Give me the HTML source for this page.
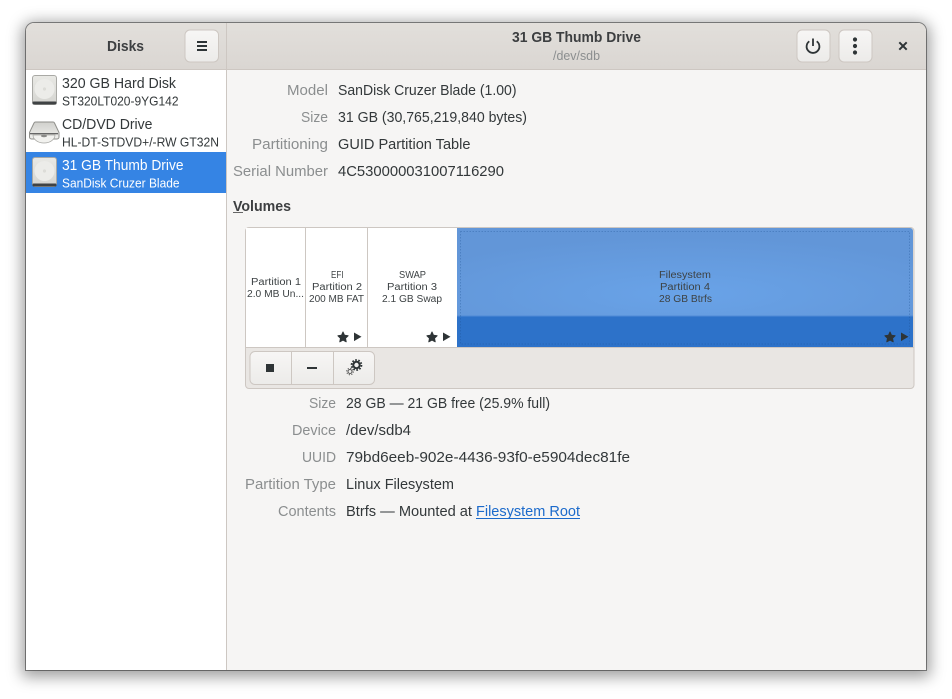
<!DOCTYPE html>
<html><head><meta charset="utf-8"><style>
html,body{margin:0;padding:0;background:#fff;width:952px;height:699px;overflow:hidden}
svg{position:absolute;left:0;top:0}
#win{position:absolute;left:26px;top:23px;width:900px;height:647px;background:#f6f5f4;border-radius:8px 8px 0 0;box-shadow:0 0 0 1px rgba(0,0,0,.42),0 3px 15px 4px rgba(0,0,0,.38)}
text{font-family:"Liberation Sans","DejaVu Sans",sans-serif;font-size:14.67px;fill:#33383a}
.b{font-weight:bold;fill:#3d3f41}.l{fill:#8b8e8f}.s{font-size:12.5px}.p{font-size:10px;fill:#3d4244}
.w{fill:#fff}
</style></head><body>
<div id="win"></div>
<svg width="952" height="699" viewBox="0 0 952 699">
<defs>
<linearGradient id="h" x1="0" y1="0" x2="0" y2="1"><stop offset="0" stop-color="#e2dfdb"/><stop offset="1" stop-color="#dad6d2"/></linearGradient>
<linearGradient id="btn" x1="0" y1="0" x2="0" y2="1"><stop offset="0" stop-color="#f7f6f5"/><stop offset="1" stop-color="#ecebe9"/></linearGradient>
<linearGradient id="dk" x1="0" y1="0" x2="0" y2="1"><stop offset="0" stop-color="#e9e9e5"/><stop offset="1" stop-color="#d4d4d0"/></linearGradient>
<linearGradient id="lid" x1="0" y1="0" x2="0" y2="1"><stop offset="0" stop-color="#d0d0cc"/><stop offset="1" stop-color="#f0f0ed"/></linearGradient>
<radialGradient id="sheen" cx=".5" cy=".75" r=".65"><stop offset="0" stop-color="#69a3e8"/><stop offset="1" stop-color="#6296d8"/></radialGradient>
<g id="disk"><rect x="0.5" y="0.5" width="24" height="29" rx="2.5" fill="url(#dk)" stroke="#a9a9a5"/><circle cx="12.5" cy="14" r="10" fill="#ecece9"/><circle cx="12.5" cy="14" r="1.6" fill="#dcdcd8"/><rect x="0.5" y="26.5" width="24" height="3" rx="1" fill="#3f4244"/></g>
<path id="star" d="M6 1 7.500 4.300 11.100 4.800 8.500 7.300 9.200 10.800 6 9.100 2.800 10.800 3.500 7.300 0.900 4.800 4.500 4.300Z" fill="#2e3436" stroke="#2e3436" stroke-width="1" stroke-linejoin="round"/>
<path id="tri" d="M0 0 7.500 4.300 0 8.600Z" fill="#2e3436"/>
</defs>

<!-- header -->
<path d="M26 69V31a8 8 0 0 1 8-8H918a8 8 0 0 1 8 8V69Z" fill="url(#h)"/>
<rect x="26" y="69" width="900" height="1" fill="#cdc7c2"/>
<rect x="226" y="23" width="1" height="647" fill="#cdc7c2"/>
<rect x="26" y="70" width="200" height="600" fill="#fff"/>
<rect x="26" y="152" width="200" height="41" fill="#3584e4"/>

<!-- header buttons -->
<rect x="185" y="30" width="33.500" height="32" rx="5" fill="url(#btn)" stroke="#cdc7c2"/>
<rect x="797" y="30" width="33" height="32" rx="5" fill="url(#btn)" stroke="#cdc7c2"/>
<rect x="839" y="30" width="33" height="32" rx="5" fill="url(#btn)" stroke="#cdc7c2"/>
<path d="M197 41h10v2h-10zM197 45h10v2h-10zM197 49h10v2h-10z" fill="#2e3436"/>
<path d="M809.300 41.300a6.400 6.400 0 1 0 7.400 0" fill="none" stroke="#2e3436" stroke-width="1.800"/><rect x="812.100" y="38.500" width="1.800" height="7.500" fill="#2e3436"/>
<circle cx="855" cy="39.500" r="2.100" fill="#2e3436"/><circle cx="855" cy="46" r="2.100" fill="#2e3436"/><circle cx="855" cy="52.500" r="2.100" fill="#2e3436"/>
<path d="M899.300 42.300 906.700 49.700M906.700 42.300 899.300 49.700" stroke="#2e3436" stroke-width="2" fill="none"/>

<text class="b" x="107" y="51" textLength="37" lengthAdjust="spacingAndGlyphs">Disks</text>
<text class="b" x="512" y="42" textLength="129" lengthAdjust="spacingAndGlyphs">31 GB Thumb Drive</text>
<text class="l s" x="553" y="60" textLength="47" lengthAdjust="spacingAndGlyphs">/dev/sdb</text>

<!-- sidebar -->
<use href="#disk" x="32" y="75"/>
<use href="#disk" x="32" y="157"/>
<path d="M29.500 132.500 34 123a1.500 1.500 0 0 1 1.500-1H53a1.500 1.500 0 0 1 1.500 1L59 132.500V137a2 2 0 0 1-2 2H31.500a2 2 0 0 1-2-2Z" fill="url(#lid)" stroke="#8f8f8b"/>
<rect x="30" y="133" width="28" height="1.300" fill="#666"/>
<path d="M33 135h22a11 8 0 0 1-22 0Z" fill="#f2f2ef" stroke="#a5a5a1" stroke-width=".7"/><ellipse cx="44" cy="136" rx="3" ry="1.200" fill="#8a8a87"/>

<text x="62" y="88" textLength="114" lengthAdjust="spacingAndGlyphs">320 GB Hard Disk</text>
<text class="s" x="62" y="105.500" textLength="116.500" lengthAdjust="spacingAndGlyphs">ST320LT020-9YG142</text>
<text x="62" y="129" textLength="90.500" lengthAdjust="spacingAndGlyphs">CD/DVD Drive</text>
<text class="s" x="62" y="146.500" textLength="157" lengthAdjust="spacingAndGlyphs">HL-DT-STDVD+/-RW GT32N</text>
<text class="w" x="62" y="170" textLength="121.500" lengthAdjust="spacingAndGlyphs">31 GB Thumb Drive</text>
<text class="w s" x="62" y="187.500" textLength="117.500" lengthAdjust="spacingAndGlyphs">SanDisk Cruzer Blade</text>

<!-- drive details -->
<text class="l" x="287" y="95" textLength="41" lengthAdjust="spacingAndGlyphs">Model</text>
<text x="338" y="95" textLength="178.500" lengthAdjust="spacingAndGlyphs">SanDisk Cruzer Blade (1.00)</text>
<text class="l" x="301" y="122" textLength="27" lengthAdjust="spacingAndGlyphs">Size</text>
<text x="338" y="122" textLength="189" lengthAdjust="spacingAndGlyphs">31 GB (30,765,219,840 bytes)</text>
<text class="l" x="252" y="149" textLength="76" lengthAdjust="spacingAndGlyphs">Partitioning</text>
<text x="338" y="149" textLength="132.500" lengthAdjust="spacingAndGlyphs">GUID Partition Table</text>
<text class="l" x="233" y="176" textLength="95" lengthAdjust="spacingAndGlyphs">Serial Number</text>
<text x="338" y="176" textLength="166" lengthAdjust="spacingAndGlyphs">4C530000031007116290</text>

<text class="b" x="233" y="211" textLength="58" lengthAdjust="spacingAndGlyphs">Volumes</text>
<rect x="233" y="212" width="10" height="1" fill="#666"/>

<!-- volume grid -->
<path d="M245.500 348V231a3.500 3.500 0 0 1 3.500-3.500H910.500a3.500 3.500 0 0 1 3.500 3.500V385a3.500 3.500 0 0 1-3.500 3.500H249a3.500 3.500 0 0 1-3.500-3.500Z" fill="#e9e6e3" stroke="#cdc7c2"/>
<rect x="246" y="228" width="211" height="119.500" fill="#fff"/>
<rect x="305" y="228" width="1" height="120" fill="#cdc7c2"/>
<rect x="367" y="228" width="1" height="120" fill="#cdc7c2"/>
<path d="M457 228H910a3 3 0 0 1 3 3V316H457Z" fill="url(#sheen)"/>
<rect x="457" y="316" width="456" height="31.500" fill="#2d72c9"/>
<rect x="457" y="315.500" width="456" height="1" fill="#4f8ad6"/>
<rect x="460.500" y="231.500" width="449" height="112.500" fill="none" stroke="#1b4f8f" stroke-opacity=".3" stroke-dasharray="1.500 1.500"/>
<rect x="246" y="347" width="667.500" height="1" fill="#cdc7c2"/>

<text class="p" x="251" y="285" textLength="50" lengthAdjust="spacingAndGlyphs">Partition 1</text>
<text class="p" x="247" y="297" textLength="57" lengthAdjust="spacingAndGlyphs">2.0 MB Un...</text>
<text class="p" x="331" y="278" textLength="12.500" lengthAdjust="spacingAndGlyphs">EFI</text>
<text class="p" x="312" y="290" textLength="50" lengthAdjust="spacingAndGlyphs">Partition 2</text>
<text class="p" x="309" y="302" textLength="55" lengthAdjust="spacingAndGlyphs">200 MB FAT</text>
<text class="p" x="399" y="278" textLength="27" lengthAdjust="spacingAndGlyphs">SWAP</text>
<text class="p" x="387" y="290" textLength="50" lengthAdjust="spacingAndGlyphs">Partition 3</text>
<text class="p" x="382" y="302" textLength="60" lengthAdjust="spacingAndGlyphs">2.1 GB Swap</text>
<text class="p" x="659" y="278" textLength="52" lengthAdjust="spacingAndGlyphs">Filesystem</text>
<text class="p" x="660" y="290" textLength="50" lengthAdjust="spacingAndGlyphs">Partition 4</text>
<text class="p" x="659" y="302" textLength="53" lengthAdjust="spacingAndGlyphs">28 GB Btrfs</text>

<use href="#star" x="337" y="331"/><use href="#tri" x="354" y="332.500"/>
<use href="#star" x="426" y="331"/><use href="#tri" x="443" y="332.500"/>
<use href="#star" x="884" y="331"/><use href="#tri" x="901" y="332.500"/>

<!-- toolbar -->
<rect x="250" y="351.500" width="124.500" height="33" rx="5" fill="url(#btn)" stroke="#cdc7c2"/>
<rect x="291" y="352" width="1" height="32" fill="#cdc7c2"/>
<rect x="333" y="352" width="1" height="32" fill="#cdc7c2"/>
<rect x="266" y="364" width="8" height="8" fill="#2e3436"/>
<rect x="307" y="367" width="10" height="2" fill="#2e3436"/>
<g fill="none" stroke="#2e3436"><circle cx="356.500" cy="365" r="3.200" stroke-width="2"/><circle cx="356.500" cy="365" r="5" stroke-width="1.700" stroke-dasharray="1.700 1.450"/><circle cx="350" cy="371.500" r="2" stroke-width="1" stroke="#555"/><circle cx="350" cy="371.500" r="3.300" stroke-width="1" stroke="#555" stroke-dasharray="1.200 1.400"/></g>

<!-- partition details -->
<text class="l" x="309" y="408" textLength="27" lengthAdjust="spacingAndGlyphs">Size</text>
<text x="346" y="408" textLength="204" lengthAdjust="spacingAndGlyphs">28 GB — 21 GB free (25.9% full)</text>
<text class="l" x="292" y="435" textLength="44" lengthAdjust="spacingAndGlyphs">Device</text>
<text x="346" y="435" textLength="65" lengthAdjust="spacingAndGlyphs">/dev/sdb4</text>
<text class="l" x="302" y="462" textLength="34" lengthAdjust="spacingAndGlyphs">UUID</text>
<text x="346" y="462" textLength="284" lengthAdjust="spacingAndGlyphs">79bd6eeb-902e-4436-93f0-e5904dec81fe</text>
<text class="l" x="245" y="489" textLength="91" lengthAdjust="spacingAndGlyphs">Partition Type</text>
<text x="346" y="489" textLength="108" lengthAdjust="spacingAndGlyphs">Linux Filesystem</text>
<text class="l" x="278" y="516" textLength="58" lengthAdjust="spacingAndGlyphs">Contents</text>
<text x="346" y="516" textLength="126" lengthAdjust="spacingAndGlyphs">Btrfs — Mounted at</text>
<text x="476" y="516" textLength="104" lengthAdjust="spacingAndGlyphs" style="fill:#1b6acb">Filesystem Root</text>
<rect x="476" y="518" width="104" height="1" fill="#1b6acb"/>
</svg>
</body></html>
